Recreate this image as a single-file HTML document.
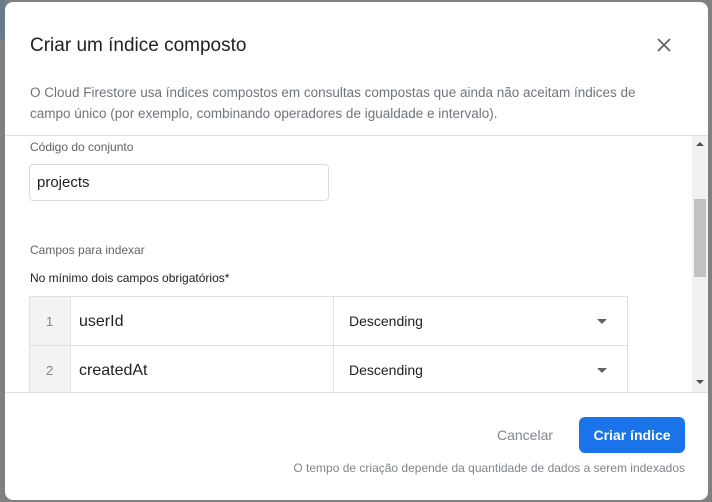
<!DOCTYPE html><html><head><style>
body{margin:0;width:712px;height:502px;background:#808080;font-family:"Liberation Sans",sans-serif;position:relative;overflow:hidden}
.d{position:absolute;left:5px;top:2px;width:703px;height:498px;background:#fff;border-radius:8px;overflow:hidden}
.a{position:absolute;white-space:nowrap}
</style></head><body>
<div class="a" style="left:0;top:0;width:5px;height:40px;background:#6a7a8a"></div>
<div class="d">
<div class="a" style="left:25px;top:33px;font-size:19px;color:#202124">Criar um índice composto</div>
<svg class="a" style="left:651px;top:35px" width="16" height="16"><path d="M2 2L14 14M14 2L2 14" stroke="#5f6368" stroke-width="1.8"/></svg>
<div class="a" style="left:25px;top:80px;font-size:13.5px;line-height:21px;color:#70757a">O Cloud Firestore usa índices compostos em consultas compostas que ainda não aceitam índices de<br>campo único (por exemplo, combinando operadores de igualdade e intervalo).</div>
<div class="a" style="left:0;top:133px;width:703px;height:1px;background:#e0e0e0"></div>
<div class="a" style="left:687px;top:134px;width:16px;height:256px;background:#f1f1f1"></div>
<div class="a" style="left:689px;top:197px;width:12px;height:78px;background:#c1c1c1"></div>
<div class="a" style="left:691px;top:140px;width:0;height:0;border:4px solid transparent;border-bottom-color:#505050;border-top:none"></div>
<div class="a" style="left:691px;top:378px;width:0;height:0;border:4px solid transparent;border-top-color:#505050;border-bottom:none"></div>
<div class="a" style="left:25px;top:138px;font-size:12px;color:#5f6368">Código do conjunto</div>
<div class="a" style="left:24px;top:162px;width:298px;height:35px;border:1px solid #dadce0;border-radius:4px"></div>
<div class="a" style="left:32px;top:172px;font-size:15px;color:#202124">projects</div>
<div class="a" style="left:25px;top:241px;font-size:12px;color:#5f6368">Campos para indexar</div>
<div class="a" style="left:25px;top:269px;font-size:12px;color:#202124">No mínimo dois campos obrigatórios*</div>
<div class="a" style="left:24px;top:294px;width:597px;height:96px;border:1px solid #e0e0e0;border-bottom:none"></div>
<div class="a" style="left:25px;top:295px;width:40px;height:95px;background:#f3f3f3;border-right:1px solid #e0e0e0"></div>
<div class="a" style="left:328px;top:295px;width:1px;height:95px;background:#e0e0e0"></div>
<div class="a" style="left:25px;top:343px;width:597px;height:1px;background:#e0e0e0"></div>
<div class="a" style="left:41px;top:312px;font-size:13px;color:#80868b">1</div>
<div class="a" style="left:41px;top:361px;font-size:13px;color:#80868b">2</div>
<div class="a" style="left:74px;top:311px;font-size:16px;color:#202124">userId</div>
<div class="a" style="left:74px;top:360px;font-size:16px;color:#202124">createdAt</div>
<div class="a" style="left:344px;top:311px;font-size:14px;color:#202124">Descending</div>
<div class="a" style="left:344px;top:360px;font-size:14px;color:#202124">Descending</div>
<div class="a" style="left:592px;top:317px;border:5px solid transparent;border-top-color:#5f6368;border-bottom:none"></div>
<div class="a" style="left:592px;top:366px;border:5px solid transparent;border-top-color:#5f6368;border-bottom:none"></div>
<div class="a" style="left:0;top:390px;width:703px;height:1px;background:#e0e0e0"></div>
<div class="a" style="left:492px;top:425px;font-size:14px;color:#80868b">Cancelar</div>
<div class="a" style="left:574px;top:415px;width:106px;height:36px;background:#1a73e8;border-radius:6px;color:#fff;font-size:14px;font-weight:bold;text-align:center;line-height:36px">Criar índice</div>
<div class="a" style="right:23px;top:459px;font-size:12px;color:#80868b">O tempo de criação depende da quantidade de dados a serem indexados</div>
</div>
</body></html>
